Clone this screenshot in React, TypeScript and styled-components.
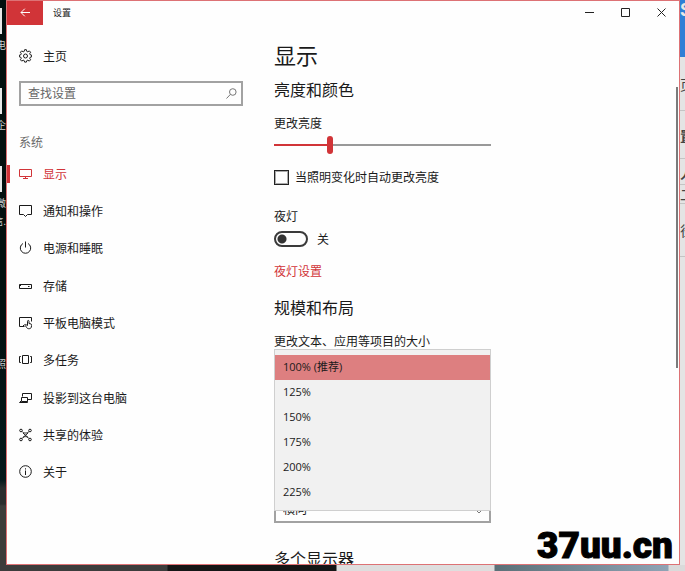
import React, { useState } from "react";
import styled, { createGlobalStyle, css } from "styled-components";

const RED = "#d13438";
const CJK = '"Noto Sans CJK SC", sans-serif';

const GlobalStyle = createGlobalStyle`
  * { box-sizing: border-box; }
  body { margin: 0; overflow: hidden; background: #e6e6e6; }
  button, input, select { font: inherit; color: inherit; }
  h1, h2, p, ul { margin: 0; padding: 0; font-weight: 400; }
  ul { list-style: none; }
`;

const Desktop = styled.div`
  position: relative;
  display: grid;
  grid-template-columns: 6px minmax(0, 1fr) 5px;
  grid-template-rows: minmax(0, 1fr) 6px;
  height: 100vh;
  font-family: ${CJK};
  font-size: 12px;
  line-height: 18px;
  color: #1a1a1a;
`;

const LeftEdge = styled.div`
  display: flex;
  flex-direction: column;
  align-items: flex-end;
  overflow: hidden;
  background: linear-gradient(#04100f 0 300px, #06191b 480px, #2b2d2d 488px 504px, #3c3c3a 506px);
`;

const IconSliver = styled.div`
  flex: none;
  align-self: flex-start;
  width: 2px;
  height: 26px;
  margin-top: 8px;
  background: #e8e8e8;
`;

const EdgeText = styled.span<{ $height: number }>`
  flex: none;
  height: ${(p) => p.$height}px;
  font-size: 10px;
  line-height: 16px;
  padding-top: 3px;
  white-space: nowrap;
  color: #c9cdd0;
`;

const RightEdge = styled.div`
  display: flex;
  flex-direction: column;
  overflow: hidden;
  background: #e4e4e4;
`;

const BlueBlock = styled.div`
  flex: none;
  height: 57px;
  padding-top: 2px;
  background: #2f7fd6;
  color: #e8e8e8;
  font: bold 18px/16px "Liberation Sans", sans-serif;
`;

const EdgeCell = styled.div<{ $height: number; $bold?: boolean }>`
  flex: none;
  display: flex;
  align-items: center;
  height: ${(p) => p.$height}px;
  overflow: hidden;
  border-bottom: 1px solid #c4c4c4;
  font-size: 14px;
  font-weight: ${(p) => (p.$bold ? 700 : 400)};
  color: #444;
`;

const BottomEdge = styled.div`
  grid-column: 1 / -1;
  background: linear-gradient(90deg, #3c3c3c 0 167px, #151515 168px 336px, #dedede 337px 494px, #5b7078 495px, #8fa3b5 668px, #dadada 669px);
`;

const Window = styled.main`
  display: flex;
  flex-direction: column;
  min-width: 0;
  overflow: hidden;
  background: #fefefe;
  border: 1px solid #dd7275;
`;

const TitleBar = styled.header`
  flex: none;
  display: flex;
  align-items: stretch;
  height: 24px;
`;

const TitleButton = styled.button<{ $accent?: boolean }>`
  display: grid;
  place-items: center;
  width: 36px;
  padding: 0 0 2px;
  border: 0;
  background: ${(p) => (p.$accent ? RED : "transparent")};
  color: ${(p) => (p.$accent ? "#fff" : "#222")};
`;

const Title = styled.span`
  flex: 1;
  padding-left: 10px;
  font-size: 9px;
  line-height: 23px;
`;

const Body = styled.div`
  flex: 1;
  display: grid;
  grid-template-columns: 236px minmax(0, 1fr);
  min-height: 0;
`;

const Sidebar = styled.aside`
  padding-top: 19px;
`;

const rowStyle = css`
  display: flex;
  align-items: center;
  gap: 11px;
  padding: 0 12px;
  color: inherit;
  text-decoration: none;
`;

const HomeLink = styled.a`
  ${rowStyle}
  height: 24px;
`;

const SearchBox = styled.label`
  display: flex;
  align-items: center;
  height: 25px;
  margin: 13px 0 0 12px;
  padding: 0 4px 1px 7px;
  border: 2px solid #a2a2a2;
`;

const SearchInput = styled.input`
  flex: 1;
  min-width: 0;
  padding: 0;
  border: 0;
  outline: 0;
  background: transparent;
  &::placeholder { color: #666; opacity: 1; }
`;

const GroupName = styled.p`
  margin: 27px 0 4px 12px;
  color: #6a6a6a;
`;

const NavList = styled.ul`
  display: grid;
  grid-auto-rows: 1fr;
  height: 336px;
`;

const NavLink = styled.a<{ $active: boolean }>`
  ${rowStyle}
  height: 100%;
  color: ${(p) => (p.$active ? RED : "inherit")};
  background: ${(p) => (p.$active ? `linear-gradient(${RED}, ${RED}) 0 50% / 3px 18px no-repeat` : "none")};
`;

const Scroller = styled.section`
  display: flex;
  justify-content: space-between;
  min-height: 0;
  overflow: hidden;
`;

const Content = styled.div`
  width: 248px;
  padding: 13px 0 0 31px;
`;

const ScrollThumb = styled.div`
  width: 2px;
  height: 281px;
  margin: 62px 1px 0 0;
  background: #7b7b7b;
`;

const PageTitle = styled.h1`
  font-size: 22px;
  line-height: 32px;
`;

const SectionTitle = styled.h2`
  font-size: 16px;
  line-height: 24px;
`;

const FieldLabel = styled.label`
  display: block;
`;

const Slider = styled.input<{ $value: number }>`
  display: block;
  appearance: none;
  width: 100%;
  height: 18px;
  margin: 4px 0 14px;
  background: linear-gradient(90deg, ${RED} ${(p) => p.$value}%, #999 ${(p) => p.$value}%) 0 50% / 100% 2px no-repeat;
  &::-webkit-slider-thumb {
    appearance: none;
    width: 6px;
    height: 18px;
    border-radius: 3px;
    background: ${RED};
  }
`;

const CheckRow = styled.label`
  display: flex;
  align-items: center;
  gap: 6px;
  height: 18px;
  white-space: nowrap;
`;

const CheckBox = styled.input`
  appearance: none;
  flex: none;
  width: 15px;
  height: 15px;
  margin: 0;
  border: 1px solid #222;
  outline: 1px solid #aaa;
  outline-offset: -2px;
  &:checked { background: ${RED}; }
`;

const ToggleRow = styled.label`
  display: flex;
  align-items: center;
  gap: 9px;
  height: 18px;
`;

const Toggle = styled.input`
  appearance: none;
  width: 34px;
  height: 16px;
  margin: 0;
  border: 2px solid #3a3a3a;
  border-radius: 8px;
  background: radial-gradient(circle at 6px 6px, #333 0 4px, transparent 5px);
  &:checked { background: radial-gradient(circle at 24px 6px, #333 0 4px, transparent 5px); }
`;

const TextLink = styled.a`
  display: block;
  color: ${RED};
  text-decoration: none;
`;

const Stack = styled.div<{ $top: number }>`
  margin-top: ${(p) => p.$top}px;
`;

const Anchor = styled.div`
  position: relative;
  height: 25px;
  margin: 5px 0 118px;
`;

const Popup = styled.div`
  position: absolute;
  z-index: 1;
  top: -6px;
  left: 0;
  right: 0;
  padding: 5px 0;
  border: 1px solid #cfcfcf;
  background: #f1f1f1;
`;

const Option = styled.button`
  display: block;
  width: 100%;
  height: 25px;
  padding: 0 8px 2px;
  border: 0;
  background: transparent;
  text-align: left;
  font: 11px/22px "Open Sans", ${CJK};
  &[aria-selected="true"] { background: #dd7f80; }
`;

const SelectBox = styled.div`
  display: grid;
  grid-template-columns: minmax(0, 1fr) 14px;
  height: 25px;
  border: 2px solid #a2a2a2;
  & > * { grid-row: 1; }
`;

const Select = styled.select`
  grid-column: 1 / -1;
  appearance: none;
  height: 21px;
  padding: 0 7px 4px;
  border: 0;
  background: transparent;
`;

const Chevron = styled.svg`
  grid-column: 2;
  align-self: end;
  margin-bottom: 7px;
  pointer-events: none;
`;

const Watermark = styled.div`
  position: absolute;
  z-index: 2;
  right: 12px;
  bottom: 5px;
  font: 900 37px/40px Roboto, "Liberation Sans", sans-serif;
  color: #000;
  -webkit-text-stroke: 1px #000;
  text-shadow: 0 0 3px #fff, 0 0 4px #fff;
`;

type IconName = "gear" | "display" | "message" | "power" | "storage" | "tablet" | "tasks" | "project" | "share" | "info";

const iconPaths: Record<IconName, React.ReactNode> = {
  gear: (
    <>
      <path d="M5.600.7h1.800l.4 1.700 1 .4L10.300 1.900l1.300 1.300-.9 1.500.4 1 1.500.4v1.800l-1.500.4-.4 1 .9 1.500-1.300 1.300-1.500-.9-1 .4-.4 1.500H5.600l-.4-1.500-1-.4-1.500.9-1.300-1.300.9-1.500-.4-1L.4 7.900V6.100l1.500-.4.4-1-.9-1.500 1.300-1.300 1.500.9 1-.4z" />
      <circle cx="6.500" cy="7" r="2" />
    </>
  ),
  display: <path d="M.5 2.500h12v7H.5zM6.500 9.500v2M4 11.500h5" />,
  message: <path d="M.5 1.500h12v9H8.500l-2 2-2-2h-4z" />,
  power: <path d="M6.500.5v6M4 2.500a5.200 5.200 0 1 0 5 0" />,
  storage: <path d="M.5 5.500h12v4H.5zM9 7.500h1.500M2.500 5.500l-1.500 1.500" />,
  tablet: (
    <>
      <path d="M5.500 10.500h-5v-9h12v4M3.500 10.500l2-2" />
      <path d="M8.500 9.500V5.300c0-1.200 1.500-1.200 1.500 0v2.200l2 .5c.7.200.8.700.7 1.300l-.4 1.700c-.3 1.200-1 1.700-2 1.700h-.8c-.8 0-1.300-.4-1.700-1L6.200 9.500c-.4-.9.400-1.300 1-.7z" />
    </>
  ),
  tasks: <path d="M3.500 2.500h6v8h-6zM1.800 3.500H.5v6h1.300M11.200 3.500h1.300v6h-1.300" />,
  project: <path d="M3.500 5.500v-3h9v6h-4M2.500 6.500h6v4h-6zM.5 11.500h8v-1M.5 11.500l2-2" />,
  share: (
    <>
      <circle cx="2" cy="2.500" r="1.300" />
      <circle cx="11" cy="2.500" r="1.300" />
      <circle cx="2" cy="11.500" r="1.300" />
      <circle cx="11" cy="11.500" r="1.300" />
      <path d="M3 3.500c1.500 2 5.500 2 7 0M3 10.500c1.500-2.500 5.500-2.500 7 0M4 5l5 4.500M9 5L4 9.500" />
    </>
  ),
  info: (
    <>
      <circle cx="6.500" cy="6.500" r="5.800" />
      <path d="M6.500 5.500v4.500M6.500 3.300v1.200" />
    </>
  ),
};

function Icon({ name }: { name: IconName }) {
  return (
    <svg width="13" height="14" viewBox="0 0 13 14" fill="none" stroke="currentColor" strokeWidth="1" aria-hidden>
      {iconPaths[name]}
    </svg>
  );
}

const navItems: { icon: IconName; label: string }[] = [
  { icon: "display", label: "显示" },
  { icon: "message", label: "通知和操作" },
  { icon: "power", label: "电源和睡眠" },
  { icon: "storage", label: "存储" },
  { icon: "tablet", label: "平板电脑模式" },
  { icon: "tasks", label: "多任务" },
  { icon: "project", label: "投影到这台电脑" },
  { icon: "share", label: "共享的体验" },
  { icon: "info", label: "关于" },
];

const scales = ["100% (推荐)", "125%", "150%", "175%", "200%", "225%"];

export default function App() {
  const [page, setPage] = useState("显示");
  const [brightness, setBrightness] = useState(25);
  const [nightLight, setNightLight] = useState(false);
  const [scale, setScale] = useState(scales[0]);

  return (
    <Desktop>
      <GlobalStyle />
      <LeftEdge aria-hidden>
        <IconSliver />
        <EdgeText $height={46}>电</EdgeText>
        <IconSliver />
        <EdgeText $height={44}>企</EdgeText>
        <IconSliver />
        <EdgeText $height={18}>微</EdgeText>
        <EdgeText $height={143}>信.</EdgeText>
        <EdgeText $height={20}>照</EdgeText>
      </LeftEdge>

      <Window>
        <TitleBar>
          <TitleButton $accent aria-label="返回">
            <svg width="10" height="9" viewBox="0 0 10 9" fill="none" stroke="currentColor" aria-hidden>
              <path d="M10 4.500H1M4.800.7L1 4.500l3.800 3.800" />
            </svg>
          </TitleButton>
          <Title>设置</Title>
          <TitleButton aria-label="最小化">
            <svg width="9" height="9" stroke="currentColor" aria-hidden><path d="M0 4.500h9" /></svg>
          </TitleButton>
          <TitleButton aria-label="最大化">
            <svg width="9" height="9" fill="none" stroke="currentColor" aria-hidden><path d="M.5.5h8v8h-8z" /></svg>
          </TitleButton>
          <TitleButton aria-label="关闭">
            <svg width="9" height="9" stroke="currentColor" aria-hidden><path d="M.5.5l8 8M8.500.5l-8 8" /></svg>
          </TitleButton>
        </TitleBar>

        <Body>
          <Sidebar>
            <HomeLink href="#home">
              <Icon name="gear" />
              主页
            </HomeLink>
            <SearchBox>
              <SearchInput placeholder="查找设置" aria-label="查找设置" />
              <svg width="11" height="11" viewBox="0 0 11 11" fill="none" stroke="#777" aria-hidden>
                <circle cx="6.800" cy="4" r="3.300" />
                <path d="M4.400 6.400L.5 10.500" />
              </svg>
            </SearchBox>
            <GroupName>系统</GroupName>
            <nav>
              <NavList>
                {navItems.map((item) => (
                  <li key={item.label}>
                    <NavLink href={`#${item.icon}`} $active={page === item.label} onClick={() => setPage(item.label)}>
                      <Icon name={item.icon} />
                      {item.label}
                    </NavLink>
                  </li>
                ))}
              </NavList>
            </nav>
          </Sidebar>

          <Scroller>
            <Content>
              <PageTitle>显示</PageTitle>
              <Stack $top={7}>
                <SectionTitle>亮度和颜色</SectionTitle>
              </Stack>
              <Stack $top={13}>
                <FieldLabel htmlFor="brightness">更改亮度</FieldLabel>
                <Slider
                  id="brightness"
                  type="range"
                  $value={brightness}
                  value={brightness}
                  onChange={(e) => setBrightness(Number(e.target.value))}
                />
                <CheckRow>
                  <CheckBox type="checkbox" />
                  当照明变化时自动更改亮度
                </CheckRow>
              </Stack>
              <Stack $top={21}>
                <FieldLabel htmlFor="night">夜灯</FieldLabel>
              </Stack>
              <Stack $top={5}>
                <ToggleRow>
                  <Toggle
                    id="night"
                    type="checkbox"
                    role="switch"
                    checked={nightLight}
                    onChange={(e) => setNightLight(e.target.checked)}
                  />
                  {nightLight ? "开" : "关"}
                </ToggleRow>
              </Stack>
              <Stack $top={14}>
                <TextLink href="#night-light">夜灯设置</TextLink>
              </Stack>
              <Stack $top={15}>
                <SectionTitle>规模和布局</SectionTitle>
              </Stack>
              <Stack $top={13}>
                <p id="scale-label">更改文本、应用等项目的大小</p>
                <Anchor>
                  <Popup role="listbox" aria-labelledby="scale-label">
                    {scales.map((s) => (
                      <Option key={s} role="option" aria-selected={s === scale} onClick={() => setScale(s)}>
                        {s}
                      </Option>
                    ))}
                  </Popup>
                </Anchor>
                <SelectBox>
                  <Select aria-label="方向">
                    <option>横向</option>
                  </Select>
                  <Chevron width="8" height="5" fill="none" stroke="#777" aria-hidden>
                    <path d="M.5.5L4 4 7.500.5" />
                  </Chevron>
                </SelectBox>
              </Stack>
              <Stack $top={23}>
                <SectionTitle>多个显示器</SectionTitle>
              </Stack>
            </Content>
            <ScrollThumb />
          </Scroller>
        </Body>
      </Window>

      <RightEdge aria-hidden>
        <BlueBlock>S</BlueBlock>
        <EdgeCell $height={54}>页</EdgeCell>
        <EdgeCell $height={48} $bold>置</EdgeCell>
        <EdgeCell $height={26} $bold>人</EdgeCell>
        <EdgeCell $height={19}>二</EdgeCell>
        <EdgeCell $height={53}>径</EdgeCell>
      </RightEdge>
      <BottomEdge />
      <Watermark>37uu.cn</Watermark>
    </Desktop>
  );
}
